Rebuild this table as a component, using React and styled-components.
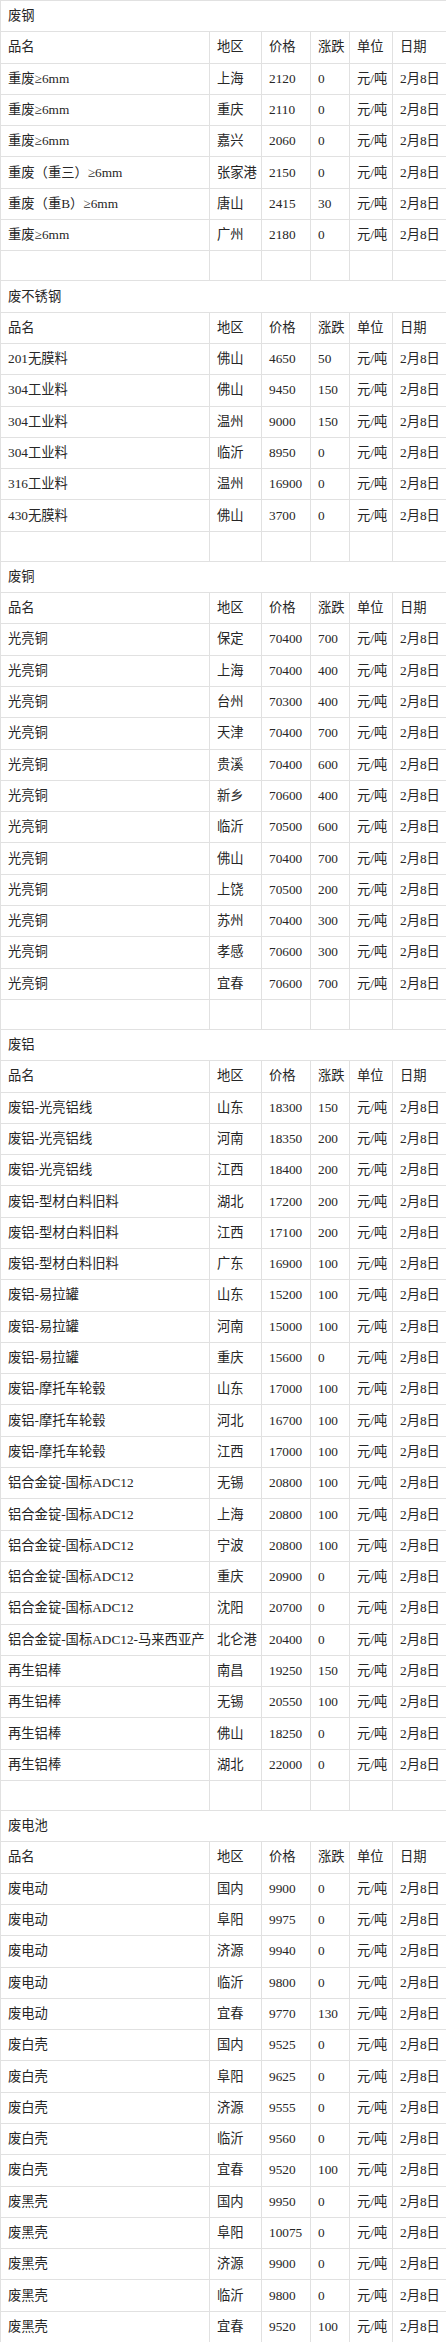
import React from 'react';
import styled, { createGlobalStyle } from 'styled-components';

const GlobalStyle = createGlobalStyle`
  html, body {
    margin: 0;
    padding: 0;
    background: #fff;
  }
  body {
    overflow-x: hidden;
  }
`;

const Wrapper = styled.div`
  width: 446px;
  overflow: hidden;
`;

const Table = styled.table`
  width: 448px;
  table-layout: fixed;
  border-collapse: collapse;
  font-family: 'Liberation Serif', 'Noto Sans CJK SC', serif;
  font-size: 13.3px;
  color: #262626;
`;

const Cell = styled.td`
  height: ${p => (p.$blank ? '29px' : '30.3px')};
  padding: 0 0 0 7px;
  border: 1px solid #e1e1e1;
  white-space: nowrap;
  overflow: hidden;
  vertical-align: middle;
  line-height: 16px;
`;

const widths = [209, 52, 49, 39, 43, 56];
const head = ['品名', '地区', '价格', '涨跌', '单位', '日期'];

const r = (name, area, price, diff) => [name, area, price, diff, '元/吨', '2月8日'];

const sections = [
  {
    title: '废钢',
    blank: true,
    rows: [
      r('重废≥6mm', '上海', '2120', '0'),
      r('重废≥6mm', '重庆', '2110', '0'),
      r('重废≥6mm', '嘉兴', '2060', '0'),
      r('重废（重三）≥6mm', '张家港', '2150', '0'),
      r('重废（重B）≥6mm', '唐山', '2415', '30'),
      r('重废≥6mm', '广州', '2180', '0'),
    ],
  },
  {
    title: '废不锈钢',
    blank: true,
    rows: [
      r('201无膜料', '佛山', '4650', '50'),
      r('304工业料', '佛山', '9450', '150'),
      r('304工业料', '温州', '9000', '150'),
      r('304工业料', '临沂', '8950', '0'),
      r('316工业料', '温州', '16900', '0'),
      r('430无膜料', '佛山', '3700', '0'),
    ],
  },
  {
    title: '废铜',
    blank: true,
    rows: [
      r('光亮铜', '保定', '70400', '700'),
      r('光亮铜', '上海', '70400', '400'),
      r('光亮铜', '台州', '70300', '400'),
      r('光亮铜', '天津', '70400', '700'),
      r('光亮铜', '贵溪', '70400', '600'),
      r('光亮铜', '新乡', '70600', '400'),
      r('光亮铜', '临沂', '70500', '600'),
      r('光亮铜', '佛山', '70400', '700'),
      r('光亮铜', '上饶', '70500', '200'),
      r('光亮铜', '苏州', '70400', '300'),
      r('光亮铜', '孝感', '70600', '300'),
      r('光亮铜', '宜春', '70600', '700'),
    ],
  },
  {
    title: '废铝',
    blank: true,
    rows: [
      r('废铝-光亮铝线', '山东', '18300', '150'),
      r('废铝-光亮铝线', '河南', '18350', '200'),
      r('废铝-光亮铝线', '江西', '18400', '200'),
      r('废铝-型材白料旧料', '湖北', '17200', '200'),
      r('废铝-型材白料旧料', '江西', '17100', '200'),
      r('废铝-型材白料旧料', '广东', '16900', '100'),
      r('废铝-易拉罐', '山东', '15200', '100'),
      r('废铝-易拉罐', '河南', '15000', '100'),
      r('废铝-易拉罐', '重庆', '15600', '0'),
      r('废铝-摩托车轮毂', '山东', '17000', '100'),
      r('废铝-摩托车轮毂', '河北', '16700', '100'),
      r('废铝-摩托车轮毂', '江西', '17000', '100'),
      r('铝合金锭-国标ADC12', '无锡', '20800', '100'),
      r('铝合金锭-国标ADC12', '上海', '20800', '100'),
      r('铝合金锭-国标ADC12', '宁波', '20800', '100'),
      r('铝合金锭-国标ADC12', '重庆', '20900', '0'),
      r('铝合金锭-国标ADC12', '沈阳', '20700', '0'),
      r('铝合金锭-国标ADC12-马来西亚产', '北仑港', '20400', '0'),
      r('再生铝棒', '南昌', '19250', '150'),
      r('再生铝棒', '无锡', '20550', '100'),
      r('再生铝棒', '佛山', '18250', '0'),
      r('再生铝棒', '湖北', '22000', '0'),
    ],
  },
  {
    title: '废电池',
    blank: false,
    rows: [
      r('废电动', '国内', '9900', '0'),
      r('废电动', '阜阳', '9975', '0'),
      r('废电动', '济源', '9940', '0'),
      r('废电动', '临沂', '9800', '0'),
      r('废电动', '宜春', '9770', '130'),
      r('废白壳', '国内', '9525', '0'),
      r('废白壳', '阜阳', '9625', '0'),
      r('废白壳', '济源', '9555', '0'),
      r('废白壳', '临沂', '9560', '0'),
      r('废白壳', '宜春', '9520', '100'),
      r('废黑壳', '国内', '9950', '0'),
      r('废黑壳', '阜阳', '10075', '0'),
      r('废黑壳', '济源', '9900', '0'),
      r('废黑壳', '临沂', '9800', '0'),
      r('废黑壳', '宜春', '9520', '100'),
    ],
  },
];

function Section({ title, rows, blank }) {
  return (
    <>
      <tr>
        <Cell colSpan={6}>{title}</Cell>
      </tr>
      <tr>
        {head.map(h => (
          <Cell key={h}>{h}</Cell>
        ))}
      </tr>
      {rows.map((row, i) => (
        <tr key={i}>
          {row.map((v, j) => (
            <Cell key={j}>{v}</Cell>
          ))}
        </tr>
      ))}
      {blank && (
        <tr>
          {head.map(h => (
            <Cell key={h} $blank />
          ))}
        </tr>
      )}
    </>
  );
}

export default function App() {
  return (
    <Wrapper>
      <GlobalStyle />
      <Table>
        <colgroup>
          {widths.map((w, i) => (
            <col key={i} style={{ width: w }} />
          ))}
        </colgroup>
        <tbody>
          {sections.map(s => (
            <Section key={s.title} {...s} />
          ))}
        </tbody>
      </Table>
    </Wrapper>
  );
}
